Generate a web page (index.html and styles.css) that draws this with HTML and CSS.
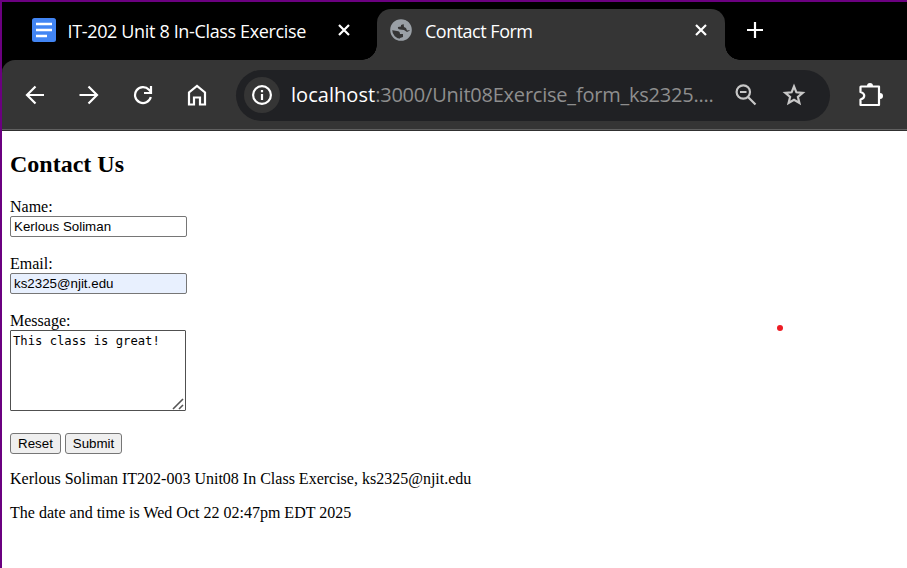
FILE: index.html
```
<!DOCTYPE html>
<html lang="en">
<head>
<meta charset="utf-8">
<title>Contact Form</title>
<link rel="stylesheet" href="styles.css">
</head>
<body>
<div class="window">
  <header class="tabs">
    <div class="tab">
      <svg class="docs" width="24" height="24" viewBox="0 0 24 24"><rect width="24" height="24" rx="2.5" fill="#4285f4"/><path d="M4 6h16M4 12h16M4 18h11" stroke="#fff" stroke-width="2.6"/></svg>
      <span class="title title-docs">IT-202 Unit 8 In-Class Exercise</span>
      <svg class="close" width="12" height="12" viewBox="0 0 12 12"><path d="M1 1l10 10M11 1L1 11" stroke="#fff" stroke-width="2.2"/></svg>
    </div>
    <div class="tab active">
      <svg class="globe" width="22" height="22" viewBox="0 0 22 22"><circle cx="11" cy="11" r="9.8" fill="none" stroke="#9aa0a6" stroke-width="2"/><path d="M11 1C5 1 1 5.500 1 11l6 1c2 0 3 1 3 3h3v3l-3 1v2c6 .5 11-4 11-10l-4 2-3-2-4-.5c-1.500 0-2.500-1-2-2.500l3-.5V6l3-1V2z" fill="#9aa0a6"/><path d="M13 1c4 0 8 4 8 10l-4 .5-1-2.500-2-1z" fill="#9aa0a6"/></svg>
      <span class="title title-form">Contact Form</span>
      <svg class="close" width="12" height="12" viewBox="0 0 12 12"><path d="M1 1l10 10M11 1L1 11" stroke="#fff" stroke-width="2.200"/></svg>
    </div>
    <svg class="plus" width="16" height="16" viewBox="0 0 16 16"><path d="M8 0v16M0 8h16" stroke="#fff" stroke-width="2.200"/></svg>
  </header>
  <nav class="toolbar">
    <svg class="back" width="20" height="20" viewBox="0 0 20 20"><path d="M19 10H2.800M10.500 1.500L2 10l8.500 8.500"/></svg>
    <svg class="forward" width="20" height="20" viewBox="0 0 20 20"><path d="M.5 10h16.500M9.500 1.500l8.500 8.500-8.500 8.500"/></svg>
    <svg class="reload" width="20" height="20" viewBox="0 0 20 20"><path d="M17.800 12A8 8 0 1 1 16 4.700L18 7M18 1v7h-7"/></svg>
    <svg class="home" width="20" height="22" viewBox="0 0 20 22"><path d="M2 20.500V8.500L10 2l8 6.500v12h-5v-7H7v7z"/></svg>
    <div class="address">
      <span class="info"><svg width="20" height="20" viewBox="0 0 20 20"><circle cx="10" cy="10" r="8.900"/><path d="M10 9v6M10 5v2.200"/></svg></span>
      <span class="url"><b>localhost</b>:3000/Unit08Exercise_form_ks2325....</span>
      <svg class="lens" width="22" height="22" viewBox="0 0 22 22"><circle cx="8.300" cy="8" r="6.700"/><path d="M5 8h6.500M13 13l7.500 7.500"/></svg>
      <svg class="star" width="24" height="24" viewBox="0 0 24 24"><path d="M12 3.500l2.400 5.800 6.300.5-4.800 4.100 1.500 6.100L12 16.700 6.600 20l1.500-6.100-4.800-4.100 6.300-.5z"/></svg>
    </div>
    <svg class="puzzle" width="26" height="26" viewBox="0 0 26 26"><path stroke-linejoin="round" d="M3 4.500h18V23H2.500v-5.500c5-1.500 5-6 0-7.500v-5z"/><path class="solid" d="M9 4a3 3 0 0 1 6 0zM22 11a3 3 0 0 1 0 6z"/></svg>
  </nav>
  <main class="page">
    <h2>Contact Us</h2>
    <form>
      <label for="name">Name:</label>
      <input id="name" type="text" value="Kerlous Soliman">
      <label for="email">Email:</label>
      <input id="email" class="autofill" type="text" value="ks2325@njit.edu">
      <label for="message">Message:</label>
      <div class="area"><textarea id="message" spellcheck="false">This class is great!</textarea><svg class="grip" width="12" height="12" viewBox="0 0 12 12"><path d="M1 11L11 1M7 11l4-4" stroke="#555" stroke-width="1.600"/></svg></div>
      <div class="buttons"><button class="reset" type="reset">Reset</button><button class="submit" type="button">Submit</button></div>
    </form>
    <p>Kerlous Soliman IT202-003 Unit08 In Class Exercise, ks2325@njit.edu</p>
    <p>The date and time is Wed Oct 22 02:47pm EDT 2025</p>
  </main>
  <span class="dot"></span>
</div>
</body>
</html>
```
FILE: styles.css
```
* { box-sizing: border-box; }
body { margin: 0; background: #fff; }
svg { display: block; flex: none; fill: none; }
.window {
  position: relative;
  width: 907px;
  height: 568px;
  overflow: hidden;
  border-left: 2px solid #6b0080;
  border-top: 2px solid #6b0080;
  background: #fff;
}
.tabs {
  display: flex;
  align-items: flex-start;
  height: 58px;
  background: #000;
  color: #fff;
}
.tab { display: flex; width: 375px; height: 51px; margin-top: 7px; padding-left: 30px; }
.tab.active {
  position: relative;
  width: 348px;
  padding-left: 13px;
  background: #353535;
  border-radius: 14px 14px 0 0;
}
.tab.active::before, .tab.active::after {
  content: "";
  position: absolute;
  bottom: 0;
  width: 15px;
  height: 15px;
}
.tab.active::before { left: -15px; background: radial-gradient(circle at 0 0, #000 14.5px, #353535 15px); }
.tab.active::after { right: -15px; background: radial-gradient(circle at 100% 0, #000 14.5px, #353535 15px); }
.docs { margin-top: 9px; }
.globe { margin-top: 10px; }
.title { font: 18px/24px "Open Sans", sans-serif; white-space: nowrap; margin-top: 10px; }
.title-docs { width: 270.5px; margin-left: 11.5px; letter-spacing: -0.35px; }
.title-form { width: 270px; margin-left: 13px; letter-spacing: -0.5px; }
.close { margin-top: 15px; }
.plus { margin: 20px 0 0 22px; }
.toolbar {
  position: relative;
  display: flex;
  align-items: center;
  height: 71px;
  padding: 0 0 0 23px;
  background: #353535;
  border-bottom: 1px solid #303030;
  box-shadow: inset 0 -1px #606060;
  border-radius: 13px 0 0 0;
}
.window::before { content: ""; position: absolute; left: 0; top: 58px; width: 14px; height: 14px; background: #000; }
.toolbar svg { stroke: #fff; stroke-width: 2.2; }
.forward, .reload, .home { margin-left: 34px; }
.address {
  display: flex;
  align-items: center;
  width: 594px;
  height: 51px;
  margin-left: 29px;
  padding-left: 8px;
  border-radius: 26px;
  background: #202124;
}
.info { display: grid; place-items: center; width: 36px; height: 36px; border-radius: 50%; background: #353535; }
.url { width: 444px; margin-left: 11px; font: 20px/28px "Open Sans", sans-serif; letter-spacing: -0.22px; color: #8e8e8e; white-space: nowrap; }
.url b { font-weight: 400; letter-spacing: 0.04px; color: #fff; }
.toolbar .lens, .toolbar .star { stroke: #c7c7c7; }
.star { margin-left: 25px; }
.puzzle { margin-left: 28px; }
.toolbar .solid { fill: #fff; stroke: none; }
.page { padding: 0 8px; overflow: hidden; font: 16px/18px "Liberation Serif", serif; color: #000; }
h2 { margin: 20px 0; font-size: 24px; line-height: 27px; }
label { display: block; height: 18px; }
input {
  display: block;
  width: 177px;
  height: 21px;
  margin: 0 0 18px;
  padding: 1px 3px;
  border: 1px solid #767676;
  border-radius: 2px;
  font: 13.333px "Liberation Sans", sans-serif;
  color: #000;
  background: #fff;
}
.autofill { background: #e8f0fe; }
.area { position: relative; width: 176px; height: 81px; }
textarea {
  display: block;
  width: 176px;
  height: 81px;
  margin: 0;
  padding: 2px;
  border: 1px solid #505050;
  border-radius: 1px;
  resize: none;
  overflow: hidden;
  font: 12.2px/16px "DejaVu Sans Mono", monospace;
  color: #000;
}
.grip { position: absolute; right: 2px; bottom: 1px; }
.buttons { display: flex; gap: 4px; margin-top: 22px; }
button {
  height: 21px;
  padding: 0;
  border: 1px solid #767676;
  border-radius: 3px;
  background: #efefef;
  font: 13.333px "Liberation Sans", sans-serif;
  color: #000;
}
.reset { width: 51px; }
.submit { width: 57px; }
p { margin: 16px 0; white-space: nowrap; }
.dot { position: absolute; left: 775px; top: 323px; width: 6px; height: 6px; border-radius: 50%; background: #ed1c24; }
```
